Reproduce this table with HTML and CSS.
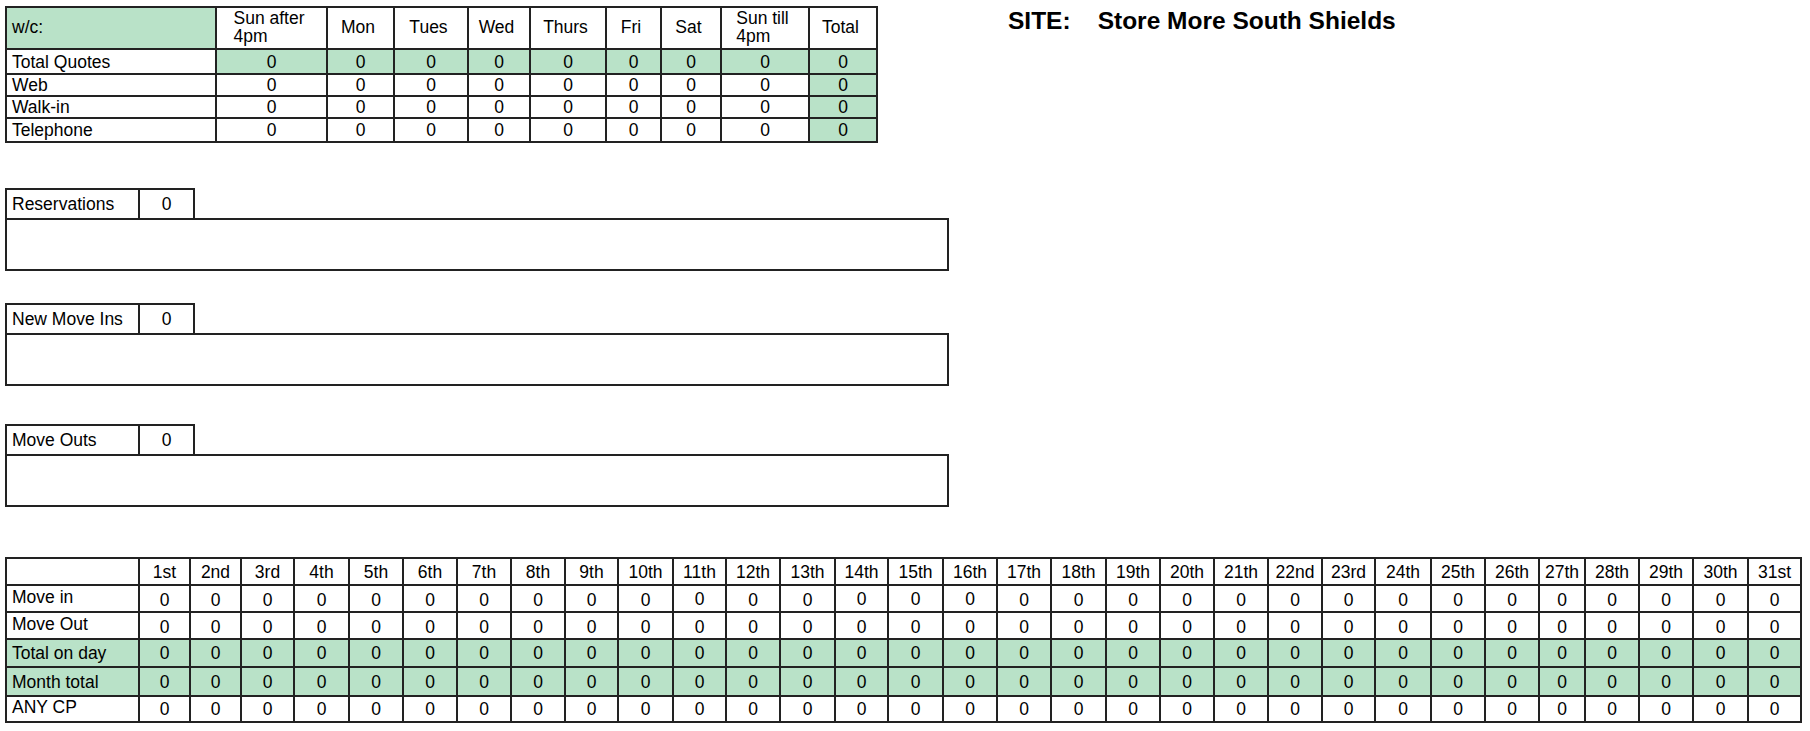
FILE: index.html
```html
<!DOCTYPE html>
<html lang="en">
<head>
<meta charset="utf-8">
<title>Store More South Shields</title>
<link rel="stylesheet" href="styles.css">
</head>
<body>
<div class="page">
  <div class="top">
    <div class="qt">
      <div class="qrow qh">
        <div class="c l g">w/c:</div>
        <div class="c h"><span class="two">Sun after<br>4pm</span></div>
        <div class="c h">Mon</div>
        <div class="c h">Tues</div>
        <div class="c h">Wed</div>
        <div class="c h">Thurs</div>
        <div class="c h">Fri</div>
        <div class="c h">Sat</div>
        <div class="c h"><span class="two">Sun till<br>4pm</span></div>
        <div class="c h">Total</div>
      </div>
      <div class="qrow q1">
        <div class="c l">Total Quotes</div>
        <div class="c g">0</div><div class="c g">0</div><div class="c g">0</div><div class="c g">0</div><div class="c g">0</div><div class="c g">0</div><div class="c g">0</div><div class="c g">0</div><div class="c g">0</div>
      </div>
      <div class="qrow q2">
        <div class="c l">Web</div>
        <div class="c">0</div><div class="c">0</div><div class="c">0</div><div class="c">0</div><div class="c">0</div><div class="c">0</div><div class="c">0</div><div class="c">0</div><div class="c g">0</div>
      </div>
      <div class="qrow q3">
        <div class="c l">Walk-in</div>
        <div class="c">0</div><div class="c">0</div><div class="c">0</div><div class="c">0</div><div class="c">0</div><div class="c">0</div><div class="c">0</div><div class="c">0</div><div class="c g">0</div>
      </div>
      <div class="qrow q4">
        <div class="c l">Telephone</div>
        <div class="c">0</div><div class="c">0</div><div class="c">0</div><div class="c">0</div><div class="c">0</div><div class="c">0</div><div class="c">0</div><div class="c">0</div><div class="c g">0</div>
      </div>
    </div>
    <h1 class="site"><span>SITE:</span><span>Store More South Shields</span></h1>
  </div>

  <section class="box sec-res">
    <div class="bh"><div class="c l">Reservations</div><div class="c">0</div></div>
    <div class="bb"></div>
  </section>

  <section class="box sec-nmi">
    <div class="bh"><div class="c l">New Move Ins</div><div class="c">0</div></div>
    <div class="bb"></div>
  </section>

  <section class="box sec-mo">
    <div class="bh"><div class="c l">Move Outs</div><div class="c">0</div></div>
    <div class="bb"></div>
  </section>

  <div class="mt">
    <div class="mrow r0">
      <div class="c l"></div>
      <div class="c">1st</div><div class="c">2nd</div><div class="c">3rd</div><div class="c">4th</div><div class="c">5th</div><div class="c">6th</div><div class="c">7th</div><div class="c">8th</div><div class="c">9th</div><div class="c">10th</div><div class="c">11th</div><div class="c">12th</div><div class="c">13th</div><div class="c">14th</div><div class="c">15th</div><div class="c">16th</div><div class="c">17th</div><div class="c">18th</div><div class="c">19th</div><div class="c">20th</div><div class="c">21th</div><div class="c">22nd</div><div class="c">23rd</div><div class="c">24th</div><div class="c">25th</div><div class="c">26th</div><div class="c">27th</div><div class="c">28th</div><div class="c">29th</div><div class="c">30th</div><div class="c">31st</div>
    </div>
    <div class="mrow r1">
      <div class="c l">Move in</div>
      <div class="c">0</div><div class="c">0</div><div class="c">0</div><div class="c">0</div><div class="c">0</div><div class="c">0</div><div class="c">0</div><div class="c">0</div><div class="c">0</div><div class="c">0</div><div class="c up">0</div><div class="c">0</div><div class="c">0</div><div class="c up">0</div><div class="c up">0</div><div class="c up">0</div><div class="c">0</div><div class="c">0</div><div class="c">0</div><div class="c">0</div><div class="c">0</div><div class="c">0</div><div class="c">0</div><div class="c">0</div><div class="c">0</div><div class="c">0</div><div class="c">0</div><div class="c">0</div><div class="c">0</div><div class="c">0</div><div class="c">0</div>
    </div>
    <div class="mrow r2">
      <div class="c l">Move Out</div>
      <div class="c">0</div><div class="c">0</div><div class="c">0</div><div class="c">0</div><div class="c">0</div><div class="c">0</div><div class="c">0</div><div class="c">0</div><div class="c">0</div><div class="c">0</div><div class="c">0</div><div class="c">0</div><div class="c">0</div><div class="c">0</div><div class="c">0</div><div class="c">0</div><div class="c">0</div><div class="c">0</div><div class="c">0</div><div class="c">0</div><div class="c">0</div><div class="c">0</div><div class="c">0</div><div class="c">0</div><div class="c">0</div><div class="c">0</div><div class="c">0</div><div class="c">0</div><div class="c">0</div><div class="c">0</div><div class="c">0</div>
    </div>
    <div class="mrow r3 g">
      <div class="c l">Total on day</div>
      <div class="c">0</div><div class="c">0</div><div class="c">0</div><div class="c">0</div><div class="c">0</div><div class="c">0</div><div class="c">0</div><div class="c">0</div><div class="c">0</div><div class="c">0</div><div class="c">0</div><div class="c">0</div><div class="c">0</div><div class="c">0</div><div class="c">0</div><div class="c">0</div><div class="c">0</div><div class="c">0</div><div class="c">0</div><div class="c">0</div><div class="c">0</div><div class="c">0</div><div class="c">0</div><div class="c">0</div><div class="c">0</div><div class="c">0</div><div class="c">0</div><div class="c">0</div><div class="c">0</div><div class="c">0</div><div class="c">0</div>
    </div>
    <div class="mrow r4 g">
      <div class="c l">Month total</div>
      <div class="c">0</div><div class="c">0</div><div class="c">0</div><div class="c">0</div><div class="c">0</div><div class="c">0</div><div class="c">0</div><div class="c">0</div><div class="c">0</div><div class="c">0</div><div class="c">0</div><div class="c">0</div><div class="c">0</div><div class="c">0</div><div class="c">0</div><div class="c">0</div><div class="c">0</div><div class="c">0</div><div class="c">0</div><div class="c">0</div><div class="c">0</div><div class="c">0</div><div class="c">0</div><div class="c">0</div><div class="c">0</div><div class="c">0</div><div class="c">0</div><div class="c">0</div><div class="c">0</div><div class="c">0</div><div class="c">0</div>
    </div>
    <div class="mrow r5">
      <div class="c l">ANY CP</div>
      <div class="c">0</div><div class="c">0</div><div class="c">0</div><div class="c">0</div><div class="c">0</div><div class="c">0</div><div class="c">0</div><div class="c">0</div><div class="c">0</div><div class="c">0</div><div class="c">0</div><div class="c">0</div><div class="c">0</div><div class="c">0</div><div class="c">0</div><div class="c">0</div><div class="c">0</div><div class="c">0</div><div class="c">0</div><div class="c">0</div><div class="c">0</div><div class="c">0</div><div class="c">0</div><div class="c">0</div><div class="c">0</div><div class="c">0</div><div class="c">0</div><div class="c">0</div><div class="c">0</div><div class="c">0</div><div class="c">0</div>
    </div>
  </div>
</div>
</body>
</html>
```

FILE: styles.css
```css
* { box-sizing: border-box; }

html, body {
  margin: 0;
  padding: 0;
  background: #ffffff;
}

body {
  font-family: "Liberation Sans", Arial, sans-serif;
  font-size: 17.5px;
  color: #000000;
}

.page {
  padding: 6px 0 0 5px;
}

/* generic cell */
.c {
  display: flex;
  align-items: center;
  justify-content: center;
  border-right: 2px solid #222222;
  border-bottom: 2px solid #222222;
  line-height: 18px;
  white-space: nowrap;
  overflow: hidden;
}

.c.l {
  justify-content: flex-start;
  padding-left: 5px;
}

.g { background: #b9e2c8; }

/* top quotes table */
.top {
  display: flex;
  align-items: flex-start;
}

.qt {
  border-left: 2px solid #222222;
  border-top: 2px solid #222222;
  width: max-content;
}

.qrow {
  display: grid;
  grid-template-columns: 210px 111px 67px 74px 62px 76px 55px 60px 88px 68px;
}

.qh { height: 42px; }
.qh .c { padding-bottom: 3px; }
.q1 { height: 25px; }
.q2 { height: 22px; }
.q3 { height: 22px; }
.q4 { height: 24px; }

.c.h { padding-right: 5px; }

.two {
  display: inline-block;
  text-align: left;
  line-height: 18px;
}

.site {
  margin: 3px 0 0 130px;
  font-size: 24.5px;
  line-height: 24px;
  font-weight: bold;
  display: flex;
  gap: 27px;
  white-space: nowrap;
}

/* comment boxes */
.box { width: max-content; }
.sec-res { margin-top: 45px; }
.sec-nmi { margin-top: 32px; }
.sec-mo { margin-top: 38px; }

.bh {
  display: grid;
  grid-template-columns: 133px 55px;
  height: 30px;
  width: max-content;
  border-left: 2px solid #222222;
  border-top: 2px solid #222222;
}

.bh .c { border-bottom: none; }

.bb {
  width: 944px;
  height: 53px;
  border: 2px solid #222222;
}

/* month table */
.mt {
  margin-top: 50px;
  border-left: 2px solid #222222;
  border-top: 2px solid #222222;
  width: max-content;
}

.mrow {
  display: grid;
  grid-template-columns: 133px 51px 51px 53px 55px 54px 54px 54px 54px 53px 55px 53px 54px 55px 53px 55px 54px 54px 55px 54px 54px 54px 54px 53px 56px 54px 54px 46px 54px 54px 55px 53px;
}

.r0 { height: 27px; }
.r1 { height: 27px; }
.r2 { height: 27px; }
.r3 { height: 28px; }
.r4 { height: 29px; }
.r5 { height: 26px; }

.r1 .c, .r2 .c { padding-top: 3px; }
.r1 .c.l, .r2 .c.l, .r5 .c.l { padding-top: 0; padding-bottom: 4px; }
.r1 .c.up { padding-top: 0; }
```
